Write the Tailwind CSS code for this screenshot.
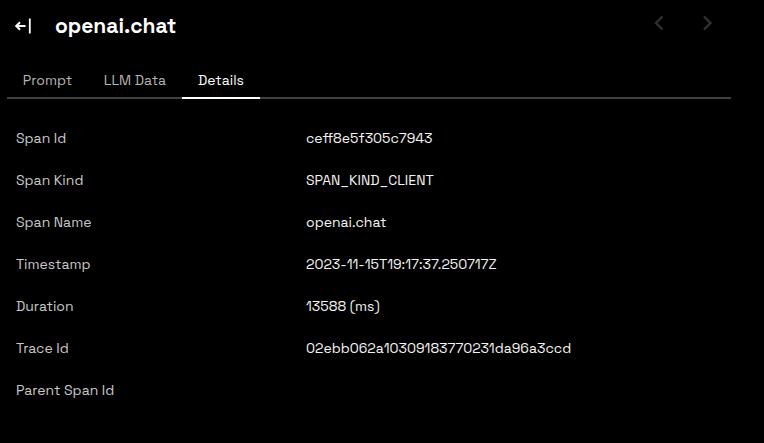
<!DOCTYPE html>
<html lang="en">
<head>
<meta charset="utf-8">
<meta name="viewport" content="width=device-width, initial-scale=1">
<title>openai.chat</title>
<script src="https://cdn.jsdelivr.net/npm/@tailwindcss/browser@4"></script>
</head>
<body class="min-h-screen bg-black text-white text-sm font-['Space_Grotesk',Inter,'Liberation_Sans',sans-serif]">
<main class="pl-[7px] pr-[33px]">
  <header class="flex h-[52px] items-center justify-between">
    <div class="flex items-center gap-[22px] pl-[7px]">
      <button type="button" aria-label="Collapse panel" class="block">
        <svg class="block" width="19" height="18" viewBox="0 0 19 18" fill="none" stroke="#fff" stroke-width="2">
          <path d="M2.5 9h9M6 5.2 2.2 9 6 12.8"/><path d="M15.8 1.5v15" stroke-width="1.8"/>
        </svg>
      </button>
      <h1 class="text-[21px] leading-7 font-bold">openai.chat</h1>
    </div>
    <nav aria-label="Spans" class="flex gap-6 pb-1.5 pr-3">
      <button type="button" aria-label="Previous span" class="block">
        <svg class="block" width="24" height="24" viewBox="0 0 24 24" fill="none" stroke="#303030" stroke-width="2.4"><path d="m15.5 5.5-6.5 6.5 6.5 6.5"/></svg>
      </button>
      <button type="button" aria-label="Next span" class="block">
        <svg class="block" width="24" height="24" viewBox="0 0 24 24" fill="none" stroke="#303030" stroke-width="2.4"><path d="m9 5.5 6.5 6.5-6.5 6.5"/></svg>
      </button>
    </nav>
  </header>
  <div role="tablist" class="mt-2 flex h-[39px] shadow-[inset_0_-2px_#3f3f46] text-[#b4b4b4]">
    <button type="button" role="tab" aria-selected="false" class="w-[81px] pt-0.5 pb-0.5">Prompt</button>
    <button type="button" role="tab" aria-selected="false" class="w-[94px] pt-0.5 pb-0.5">LLM Data</button>
    <button type="button" role="tab" aria-selected="true" class="w-[78px] border-b-2 border-white pt-0.5 text-white">Details</button>
  </div>
  <table class="mt-[18px] ml-[9px] text-left">
    <tbody class="text-[#f4f4f4]">
      <tr class="h-[42px]"><th scope="row" class="w-[290px] font-normal text-[#c8c8c8]">Span Id</th><td>ceff8e5f305c7943</td></tr>
      <tr class="h-[42px]"><th scope="row" class="font-normal text-[#c8c8c8]">Span Kind</th><td>SPAN_KIND_CLIENT</td></tr>
      <tr class="h-[42px]"><th scope="row" class="font-normal text-[#c8c8c8]">Span Name</th><td>openai.chat</td></tr>
      <tr class="h-[42px]"><th scope="row" class="font-normal text-[#c8c8c8]">Timestamp</th><td>2023-11-15T19:17:37.250717Z</td></tr>
      <tr class="h-[42px]"><th scope="row" class="font-normal text-[#c8c8c8]">Duration</th><td>13588 (ms)</td></tr>
      <tr class="h-[42px]"><th scope="row" class="font-normal text-[#c8c8c8]">Trace Id</th><td>02ebb062a10309183770231da96a3ccd</td></tr>
      <tr class="h-[42px]"><th scope="row" class="font-normal text-[#c8c8c8]">Parent Span Id</th><td></td></tr>
    </tbody>
  </table>
</main>
</body>
</html>
